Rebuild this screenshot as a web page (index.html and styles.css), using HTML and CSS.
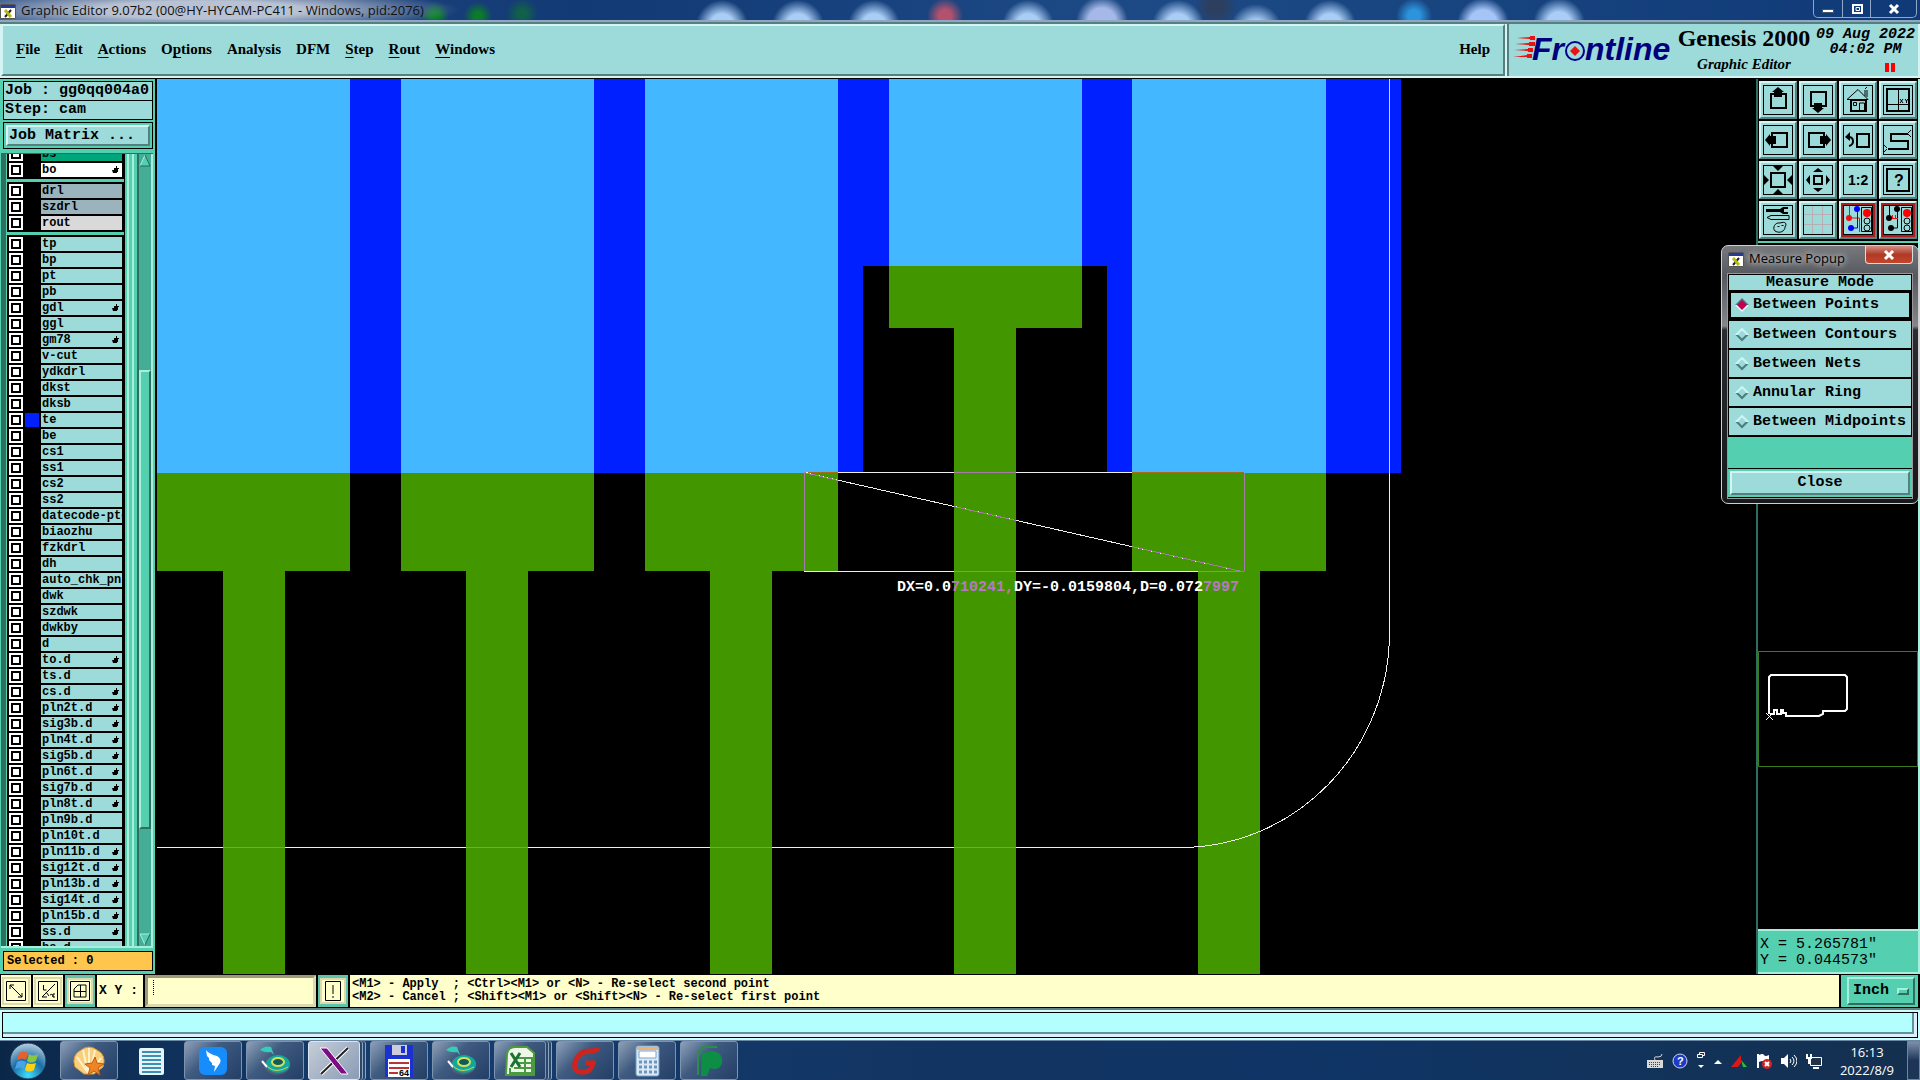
FILE: index.html
```html
<!DOCTYPE html>
<html lang="en">
<head>
<meta charset="utf-8">
<title>Graphic Editor 9.07b2</title>
<link rel="stylesheet" href="styles.css">
</head>
<body>
<svg class="defs" aria-hidden="true">
  <symbol id="hand" viewBox="0 0 8 8"><path d="M0 4h2V2h2V0h1v2h2v1H6v3H5v1H1z"/></symbol>
  <symbol id="xwin" viewBox="0 0 16 15"><path fill="#fff" stroke="#555" d="M.5.5h15v14H.5z"/><path fill="#223a9c" d="M1 1h14v3H1z"/><path stroke="#222" stroke-width="2" d="M11 6l-6 7"/><path stroke="#b5ba16" stroke-width="3" d="M5 6l6 7"/></symbol>
</svg>

<header class="titlebar">
  <svg class="winicon"><use href="#xwin"/></svg>
  <h1 class="caption">Graphic Editor 9.07b2 (00@HY-HYCAM-PC411 - Windows, pid:2076)</h1>
  <div class="winbuttons">
    <button aria-label="Minimize"><svg viewBox="0 0 14 12"><path fill="#fff" stroke="#456" d="M1.500 6.500h11v3h-11z"/></svg></button>
    <button aria-label="Restore"><svg viewBox="0 0 14 12"><path fill="none" stroke="#fff" stroke-width="2" d="M3 2h9v8H3z"/><path fill="none" stroke="#fff" d="M6 4.500h3.500v3H6z"/></svg></button>
    <button class="wide" aria-label="Close"><svg viewBox="0 0 14 12"><path stroke="#fff" stroke-width="3" d="M3 2l8 8M11 2l-8 8"/></svg></button>
  </div>
</header>

<div class="top">
  <nav class="menubar">
    <button><u>F</u>ile</button>
    <button><u>E</u>dit</button>
    <button><u>A</u>ctions</button>
    <button>O<u>p</u>tions</button>
    <button>Analysis</button>
    <button>DFM</button>
    <button><u>S</u>tep</button>
    <button><u>R</u>out</button>
    <button><u>W</u>indows</button>
    <button class="help">Help</button>
  </nav>
  <div class="brand">
    <svg class="logo" viewBox="0 0 162 34">
      <g fill="#e11"><path d="M4 6l13-1v-1h5v4h-5V7zM2 12l14-1v-1h6v4h-6v-1zM1 18l14-1v-1h5v4h-5v-1zM0 25l14-2v-1h5v4h-5v-1z"/></g>
      <text x="19" y="28">Fr</text>
      <circle cx="62" cy="19" r="9" fill="none" stroke="#00008b" stroke-width="2"/>
      <path fill="#e11" d="M62 14l5 5-5 5-5-5z"/>
      <text x="72" y="28">ntline</text>
    </svg>
    <div class="product"><strong>Genesis 2000</strong><em>Graphic Editor</em></div>
    <div class="clock"><span>09 Aug 2022</span><span>04:02 PM</span><i class="pause"></i></div>
  </div>
</div>

<main class="main">
  <aside class="side">
    <div class="jobinfo"><span>Job : gg0qq004a0</span><span>Step: cam</span></div>
    <div class="matrix"><button>Job Matrix ...</button></div>
    <div class="layers">
      <div class="list">
        <div class="group first">
          <label class="row green"><input type="checkbox"><i></i><span>bs</span></label>
          <label class="row white"><input type="checkbox"><i></i><span>bo<svg><use href="#hand"/></svg></span></label>
        </div>
        <div class="group">
          <label class="row steel"><input type="checkbox"><i></i><span>drl</span></label>
          <label class="row steel"><input type="checkbox"><i></i><span>szdrl</span></label>
          <label class="row grey"><input type="checkbox"><i></i><span>rout</span></label>
        </div>
        <div class="group">
          <label class="row"><input type="checkbox"><i></i><span>tp</span></label>
          <label class="row"><input type="checkbox"><i></i><span>bp</span></label>
          <label class="row"><input type="checkbox"><i></i><span>pt</span></label>
          <label class="row"><input type="checkbox"><i></i><span>pb</span></label>
          <label class="row"><input type="checkbox"><i></i><span>gdl<svg><use href="#hand"/></svg></span></label>
          <label class="row"><input type="checkbox"><i></i><span>ggl</span></label>
          <label class="row"><input type="checkbox"><i></i><span>gm78<svg><use href="#hand"/></svg></span></label>
          <label class="row"><input type="checkbox"><i></i><span>v-cut</span></label>
          <label class="row"><input type="checkbox"><i></i><span>ydkdrl</span></label>
          <label class="row"><input type="checkbox"><i></i><span>dkst</span></label>
          <label class="row"><input type="checkbox"><i></i><span>dksb</span></label>
          <label class="row shown"><input type="checkbox"><i></i><span>te</span></label>
          <label class="row"><input type="checkbox"><i></i><span>be</span></label>
          <label class="row"><input type="checkbox"><i></i><span>cs1</span></label>
          <label class="row"><input type="checkbox"><i></i><span>ss1</span></label>
          <label class="row"><input type="checkbox"><i></i><span>cs2</span></label>
          <label class="row"><input type="checkbox"><i></i><span>ss2</span></label>
          <label class="row"><input type="checkbox"><i></i><span>datecode-pte</span></label>
          <label class="row"><input type="checkbox"><i></i><span>biaozhu</span></label>
          <label class="row"><input type="checkbox"><i></i><span>fzkdrl</span></label>
          <label class="row"><input type="checkbox"><i></i><span>dh</span></label>
          <label class="row"><input type="checkbox"><i></i><span>auto_chk_pnl</span></label>
          <label class="row"><input type="checkbox"><i></i><span>dwk</span></label>
          <label class="row"><input type="checkbox"><i></i><span>szdwk</span></label>
          <label class="row"><input type="checkbox"><i></i><span>dwkby</span></label>
          <label class="row"><input type="checkbox"><i></i><span>d</span></label>
          <label class="row"><input type="checkbox"><i></i><span>to.d<svg><use href="#hand"/></svg></span></label>
          <label class="row"><input type="checkbox"><i></i><span>ts.d</span></label>
          <label class="row"><input type="checkbox"><i></i><span>cs.d<svg><use href="#hand"/></svg></span></label>
          <label class="row"><input type="checkbox"><i></i><span>pln2t.d<svg><use href="#hand"/></svg></span></label>
          <label class="row"><input type="checkbox"><i></i><span>sig3b.d<svg><use href="#hand"/></svg></span></label>
          <label class="row"><input type="checkbox"><i></i><span>pln4t.d<svg><use href="#hand"/></svg></span></label>
          <label class="row"><input type="checkbox"><i></i><span>sig5b.d<svg><use href="#hand"/></svg></span></label>
          <label class="row"><input type="checkbox"><i></i><span>pln6t.d<svg><use href="#hand"/></svg></span></label>
          <label class="row"><input type="checkbox"><i></i><span>sig7b.d<svg><use href="#hand"/></svg></span></label>
          <label class="row"><input type="checkbox"><i></i><span>pln8t.d<svg><use href="#hand"/></svg></span></label>
          <label class="row"><input type="checkbox"><i></i><span>pln9b.d</span></label>
          <label class="row"><input type="checkbox"><i></i><span>pln10t.d</span></label>
          <label class="row"><input type="checkbox"><i></i><span>pln11b.d<svg><use href="#hand"/></svg></span></label>
          <label class="row"><input type="checkbox"><i></i><span>sig12t.d<svg><use href="#hand"/></svg></span></label>
          <label class="row"><input type="checkbox"><i></i><span>pln13b.d<svg><use href="#hand"/></svg></span></label>
          <label class="row"><input type="checkbox"><i></i><span>sig14t.d<svg><use href="#hand"/></svg></span></label>
          <label class="row"><input type="checkbox"><i></i><span>pln15b.d<svg><use href="#hand"/></svg></span></label>
          <label class="row"><input type="checkbox"><i></i><span>ss.d<svg><use href="#hand"/></svg></span></label>
          <label class="row"><input type="checkbox"><i></i><span>bs.d</span></label>
        </div>
      </div>
      <div class="rail"></div>
      <div class="scroll">
        <svg viewBox="0 0 12 13"><path fill="#54cfb0" d="M6 1l5 11H1z"/><path fill="none" stroke="#a8eedd" d="M6 1L1 12"/><path fill="none" stroke="#256b58" d="M6 1l5 11H1"/></svg>
        <div class="trough"><div class="thumb"></div></div>
        <svg viewBox="0 0 12 13"><path fill="#54cfb0" d="M1 1h10L6 12z"/><path fill="none" stroke="#a8eedd" d="M6 12L1 1h10"/><path fill="none" stroke="#256b58" d="M11 1L6 12"/></svg>
      </div>
    </div>
    <div class="selected">Selected : 0</div>
  </aside>

  <svg class="canvas" viewBox="157 79 1600 895" preserveAspectRatio="xMinYMin slice" shape-rendering="crispEdges">
    <g fill="#0020ff">
      <path d="M350 79h51v394h-51zM594 79h51v394h-51zM1326 79h75v394h-75z"/>
      <path d="M838 79h51v187h-26v207h-25zM1082 79h50v394h-25V266h-25z"/>
    </g>
    <path fill="#43b7ff" d="M157 79h193v394H157zM401 79h193v394H401zM645 79h193v394H645zM889 79h193v187H889zM1132 79h194v394h-194z"/>
    <g fill="#429700">
      <path d="M157 473h193v98h-65v403h-62V571h-66zM401 473h193v98h-66v403h-62V571h-65zM645 473h193v98h-66v403h-62V571h-65zM889 266h193v62h-66v646h-62V328h-65zM1132 473h194v98h-66v403h-62V571h-66z"/>
    </g>
    <g fill="none" stroke="#eee">
      <path stroke="#dcdca0" d="M1389.500 79v394"/>
      <path d="M1389.500 473v159A209 215 0 0 1 1180.500 847.500H157"/>
      <path d="M804 472.500h440M804 571.500h440M804 472.500l438 99"/>
    </g>
    <g fill="none" stroke="#a77ba7">
      <path d="M804.500 473v98M1244.500 473v98M954 472.500h62M954 571.500h62M1198 571.500h46M804 472.500l34 8M954 506.500l62 14M1132 546.500l110 25"/>
      <path stroke="#a86a18" d="M808 472.500h30M1132 472.500h112"/>
      <path d="M223 847.500h62M466 847.500h62M710 847.500h62M954 847.500h62"/>
    </g>
    <text x="897" y="591" fill="#fff">DX=0.0<tspan fill="#b878c8">710241,</tspan>DY=-0.0159804,D=0.072<tspan fill="#b878c8">7997</tspan></text>
  </svg>

  <aside class="right">
    <div class="tools">
      <button aria-label="Pan up"><svg viewBox="0 0 30 30"><path class="b" d="M8 9h15v14H8z"/><path d="M15 2l6 5h-2v5h-8V7H9z"/></svg></button>
      <button aria-label="Pan down"><svg viewBox="0 0 30 30"><path class="b" d="M8 7h15v14H8z"/><path d="M15 28l6-5h-2v-5h-8v5H9z"/></svg></button>
      <button aria-label="Home"><svg viewBox="0 0 30 30"><path class="l" d="M4 14.500L15 4.500l10 10zM22 11V5M24 12V5M22 4l2-2"/><path class="b" d="M8 15h15v11H8z"/><path class="l" d="M16.500 26v-8h5v8M10.500 17.500h3v3h-3z"/></svg></button>
      <button aria-label="Zoom to coordinates"><svg viewBox="0 0 30 30"><path class="b" d="M4 4h22v22H4z"/><path class="l" d="M15.500 4v22M4 19.500h22M17 14l3 4M20 14l-3 4M22 14l1.500 2M25 14l-1.500 2v2"/></svg></button>
      <button aria-label="Pan left"><svg viewBox="0 0 30 30"><path class="b" d="M9 8h15v14H9z"/><path d="M2 15l5-6v2h6v8H7v2z"/></svg></button>
      <button aria-label="Pan right"><svg viewBox="0 0 30 30"><path class="b" d="M6 8h15v14H6z"/><path d="M28 15l-5-6v2h-6v8h6v2z"/></svg></button>
      <button aria-label="Previous view"><svg viewBox="0 0 30 30"><path class="b" d="M14 9h12v13H14zM5 12c6-1 7 8 1 9"/><path d="M2 12l5-5v9z"/></svg></button>
      <button aria-label="Serpentine"><svg viewBox="0 0 30 30"><path class="b" d="M25 9H8v7h17v8H5"/><path class="l" d="M25 8l3-3M25 9l3 3M4 23l-3-3M4 24l-3 3"/></svg></button>
      <button aria-label="Zoom in"><svg viewBox="0 0 30 30"><path class="b" d="M8 8h14v14H8z"/><path d="M10 1h10l-5 5zM10 29h10l-5-5zM1 10v10l5-5zM29 10v10l-5-5z"/></svg></button>
      <button aria-label="Zoom out"><svg viewBox="0 0 30 30"><path class="b" d="M11 11h8v8h-8z"/><path d="M10 7h10l-5-4zM10 23h10l-5 4zM7 10v10l-4-5zM23 10v10l4-5z"/></svg></button>
      <button aria-label="Zoom ratio"><svg viewBox="0 0 30 30"><text x="5" y="20" font-size="14" class="sans">1:2</text></svg></button>
      <button aria-label="Query"><svg viewBox="0 0 30 30"><path class="b" d="M4 4h22v22H4z"/><text x="11" y="21" font-size="16" class="sans">?</text></svg></button>
      <button aria-label="Options"><svg viewBox="0 0 30 30"><path d="M3 4h14l3-2h5v2h-4v3h4v2h-5l-3-2H3z"/><path class="l" d="M4 12.500l4-2h18v4H8zM12 26c-3-3 0-9 5-8 6-2 7 1 5 4 0 4-5 7-10 4zM14.500 21.500h2M18.500 20.500h2"/></svg></button>
      <button aria-label="Grid"><svg viewBox="0 0 30 30"><path class="l pink" d="M9.500 1v28M19.500 1v28M1 9.500h28M1 19.500h28"/></svg></button>
      <button class="alert" aria-label="Online checks"><svg viewBox="0 0 30 30"><path class="l red" d="M6.500 1v12h10v14"/><path class="l blue" d="M14.500 5v18h-5"/><circle cx="6" cy="13" r="3" fill="#e11"/><circle cx="14" cy="4" r="3" fill="#00f"/><circle cx="8" cy="23" r="3" fill="#00f"/><path class="l" d="M18.500 2.500h10v24h-10z"/><circle cx="24" cy="8" r="4" fill="#f00"/><circle class="l" cx="24" cy="16" r="3"/><circle class="l" cx="24" cy="23" r="3"/></svg></button>
      <button class="alert" aria-label="Net checks"><svg viewBox="0 0 30 30"><path class="l" d="M6.500 1v12M14.500 5v18h-5"/><path class="l red" d="M7 13.500h8M9.500 10v3M12.500 10v3"/><circle cx="6" cy="13" r="3"/><circle cx="14" cy="4" r="3"/><circle cx="8" cy="23" r="3"/><path class="l" d="M18.500 2.500h10v24h-10z"/><circle cx="24" cy="8" r="4" fill="#f00"/><circle class="l" cx="24" cy="16" r="3"/><circle class="l" cx="24" cy="23" r="3"/></svg></button>
    </div>
    <div class="preview">
      <svg viewBox="0 0 160 116"><path fill="none" stroke="#3c7a1c" d="M.5.5h159v115H.5z"/><path fill="none" stroke="#fff" stroke-width="2" d="M11 63V26l2-2h74l2 2v32l-2 2H65v3l-4 2H28v-3h-3v-3h-2v4h-4v-4h-3v4h-4"/><path stroke="#fff" d="M8 62l7 7M15 62l-7 7"/></svg>
    </div>
    <div class="coords"><span>X = 5.265781"</span><span>Y = 0.044573"</span></div>
  </aside>
</main>

<div class="prompt">
  <button class="sq" aria-label="Snap diagonal"><svg viewBox="0 0 20 20"><path class="l" d="M.5.5h19v19H.5zM4 4l12 12M4 8V4h4M16 12v4h-4"/></svg></button>
  <button class="sq" aria-label="Angle mode"><svg viewBox="0 0 20 20"><path class="l" d="M.5.5h19v19H.5zM17 3L4 16h5M5.500 4v5h3M8 11l3 4M12 14q3-2 3 2M17 13h-2v3h2"/></svg></button>
  <button class="sq on" aria-label="Snap grid"><svg viewBox="0 0 20 20"><path class="l" d="M.5.5h19v19H.5zM4 8l4-4h8v12H4zM10.500 4v12M4 10.500h12"/></svg></button>
  <label class="xy" for="xy">X Y :</label>
  <input id="xy" type="text" value="">
  <button class="sq on" aria-label="Warning"><svg viewBox="0 0 20 20"><path class="l" d="M2.500.5h15v19h-15zM10 4v9M10 15v2"/></svg></button>
  <p class="hint">&lt;M1&gt; - Apply  ; &lt;Ctrl&gt;&lt;M1&gt; or &lt;N&gt; - Re-select second point
&lt;M2&gt; - Cancel ; &lt;Shift&gt;&lt;M1&gt; or &lt;Shift&gt;&lt;N&gt; - Re-select first point</p>
  <div class="units"><button>Inch<i></i></button></div>
</div>
<div class="status"><div></div></div>

<footer class="taskbar">
  <button class="orb" aria-label="Start"><svg viewBox="0 0 38 38"><defs><radialGradient id="orbfill" cx=".5" cy=".9" r=".9"><stop offset="0" stop-color="#3fe0ff"/><stop offset=".5" stop-color="#1b6ea5"/><stop offset="1" stop-color="#b9cfdf"/></radialGradient></defs><circle cx="19" cy="19" r="18" fill="url(#orbfill)" stroke="#17334f"/><path fill="#e8602c" d="M10 11q5-3 9 0l-2 7q-4-3-9 0z"/><path fill="#8cc63f" d="M20 12q4 3 9 0l-2 7q-5 3-9 0z"/><path fill="#4aa3e8" d="M8 20q4-3 9 0l-2 7q-4-3-9 0z"/><path fill="#fcd116" d="M18 21q4 2 9 0l-2 7q-5 3-9 0z"/></svg></button>
  <button class="app" aria-label="Shell"><svg viewBox="0 0 32 32"><path fill="#f8cf7c" stroke="#d9963a" d="M11 29L2 22Q-2 10 8 5q8-6 16 0 10 5 6 17l-9 7z"/><path stroke="#fff1c9" stroke-width="2" d="M15 28L4 12M15 28L10 5M16 28V3M17 28l5-23M17 28l11-15"/><path fill="#ee8424" stroke="#c25a10" d="M22 12l2 6 7 1-6 4 2 7-6-4-6 4 2-7-5-4 7-1z"/></svg></button>
  <button class="app flat" aria-label="Notes"><svg viewBox="0 0 32 32"><rect x="4" y="3" width="25" height="27" rx="2" fill="#e6f4fa"/><path stroke="#3c8fb5" stroke-width="2" d="M7 7h19M7 11h19M7 15h19M7 19h19M7 23h19M7 27h19"/></svg></button>
  <button class="app" aria-label="DingTalk"><svg viewBox="0 0 32 32"><rect x="2" y="2" width="28" height="28" rx="6" fill="#168dfb"/><path fill="#fff" d="M9 5q3 4 11 6 5 3 3 7l-6 9 1-6-3-1v-2l-3-3v-2l-2-2z"/></svg></button>
  <button class="app" aria-label="Genesis"><svg viewBox="0 0 32 32"><ellipse cx="18" cy="20" rx="13" ry="10" fill="#555a78"/><ellipse cx="19" cy="19" rx="12" ry="9" fill="#12a79b"/><ellipse cx="19" cy="17" rx="6" ry="4" fill="#115c58" stroke="#d7de5c" stroke-width="2"/><path fill="none" stroke="#c5d65a" d="M9 22q8 7 20 0"/><path fill="#36cdb8" d="M1 5q5-5 11-3l3 8-3-3q-6 1-11-2z"/><path stroke="#fff" stroke-width="2" d="M3 16l5 6"/></svg></button>
  <button class="app active stack" aria-label="X server"><svg viewBox="0 0 32 32"><path stroke="#fff" stroke-width="4" d="M30 3L3 29"/><path stroke="#222" stroke-width="2" d="M30 3L3 29"/><path fill="#7d0d86" stroke="#fff" d="M2 3h7l21 26h-7z"/></svg></button>
  <button class="app" aria-label="Save"><svg viewBox="0 0 32 32"><path fill="#1b32d0" d="M2 0h28v32H2z"/><path fill="#ccd" d="M9 0h15v10H9z"/><path fill="#1b32d0" d="M18 1h4v7h-4z"/><path fill="#fff" d="M5 14h22v18H5z"/><path stroke="#b33" stroke-width="2" d="M6 18h20M6 23h20M6 28h9"/><text x="16" y="31" font-size="9">64</text></svg></button>
  <button class="app" aria-label="Genesis tools"><svg viewBox="0 0 32 32"><ellipse cx="18" cy="20" rx="13" ry="10" fill="#555a78"/><ellipse cx="19" cy="19" rx="12" ry="9" fill="#12a79b"/><ellipse cx="19" cy="17" rx="6" ry="4" fill="#115c58" stroke="#d7de5c" stroke-width="2"/><path fill="none" stroke="#c5d65a" d="M9 22q8 7 20 0"/><path fill="#36cdb8" d="M1 5q5-5 11-3l3 8-3-3q-6 1-11-2z"/><path stroke="#fff" stroke-width="2" d="M3 16l5 6"/></svg></button>
  <button class="app stack" aria-label="Excel"><svg viewBox="0 0 32 32"><path fill="#eef6e8" stroke="#4f9a3c" stroke-width="2" d="M3 9q1-7 8-7h12l7 6v22H2z"/><path fill="none" stroke="#4a9a44" stroke-width="2" d="M14 13h14v15H6v-5M21 13v15M14 18h14M10 23h18"/><path stroke="#1c7030" stroke-width="3" d="M7 8l9 14M16 8L7 22"/></svg></button>
  <button class="app" aria-label="G editor"><svg viewBox="0 0 32 32"><path fill="none" stroke="#d0231d" stroke-width="5" d="M29 3Q28 6 20 6 9 7 6 18q-2 10 9 9 7 0 9-9h-8"/></svg></button>
  <button class="app" aria-label="Calculator"><svg viewBox="0 0 32 32"><rect x="5" y="1" width="23" height="30" rx="2" fill="#dbe8f5" stroke="#6d9cc7"/><path fill="#f0b26b" d="M6 2h21v3H6z"/><path fill="#fff" stroke="#7da5cc" d="M8 6h17v7H8z"/><path stroke="#6c94bd" stroke-width="3" stroke-dasharray="3 2" d="M8 17h18M8 22h18M8 27h18"/></svg></button>
  <button class="app" aria-label="P viewer"><svg viewBox="0 0 32 32"><path fill="none" stroke="#2c8c48" stroke-width="2" d="M5 30V7l5-5h14"/><path fill="#0c8f45" d="M9 9q10-6 18 0 5 8-1 14-5 2-9 0l-3 8H8z"/></svg></button>
  <div class="tray">
    <svg viewBox="0 0 16 16"><path fill="#d8d8d8" d="M0 7h16v8H0z"/><path fill="none" stroke="#d8d8d8" d="M8 7q-2-4 3-3 4 0 4-3"/><path stroke="#444" stroke-dasharray="1 1" d="M2 9.500h12M2 11.500h12M4 13.500h8"/></svg>
    <svg viewBox="0 0 16 16"><circle cx="8" cy="8" r="7" fill="#1e3bc4" stroke="#c9d3f5"/><text x="5" y="12" font-size="11" fill="#fff" class="sans">?</text></svg>
    <svg class="slim" viewBox="0 0 8 18"><path fill="none" stroke="#fff" d="M2.500 2V.5h5v3H6M.5 2.500h5v3h-5z"/><path fill="#fff" d="M1 13h6l-3 3z"/></svg>
    <svg class="slim" viewBox="0 0 8 18"><path fill="#fff" d="M0 12h8L4 8z"/></svg>
    <svg viewBox="0 0 16 16"><path fill="#e01515" d="M0 14L10 2v8l-3 4z"/><path fill="#24c63a" d="M10 7l6 7h-4z"/></svg>
    <svg viewBox="0 0 16 16"><path fill="#fff" d="M1 1h2v14H1zM3 2q4-2 5 0t5 0v7q-4 2-5 0T3 9z"/><circle cx="11" cy="11" r="5" fill="#d32222"/><path stroke="#fff" stroke-width="2" d="M9 9l4 4M13 9l-4 4"/></svg>
    <svg viewBox="0 0 16 16"><path fill="#fff" d="M0 5h3l4-4v14l-4-4H0z"/><path fill="none" stroke="#fff" d="M9 6q2 2 0 4M11 4q4 4 0 8M13 2q6 6 0 12"/></svg>
    <svg viewBox="0 0 16 16"><path fill="#234" stroke="#fff" d="M4.500 4.500h11v8h-11z"/><path stroke="#fff" stroke-width="2" fill="none" d="M7 15h6M1 1v4h4V1M3 5v6"/></svg>
    <div class="time"><span>16:13</span><span>2022/8/9</span></div>
  </div>
  <button class="peek" aria-label="Show desktop"></button>
</footer>

<section class="popup" aria-label="Measure Popup">
  <header><svg class="winicon"><use href="#xwin"/></svg><h2>Measure Popup</h2><button class="close" aria-label="Close popup"><svg viewBox="0 0 14 12"><path stroke="#fff" stroke-width="3" d="M3 2l8 8M11 2l-8 8"/></svg></button></header>
  <form class="pbody">
    <div class="ptitle">Measure Mode</div>
    <label class="picked"><input type="radio" name="mode" checked>Between Points</label>
    <label><input type="radio" name="mode">Between Contours</label>
    <label><input type="radio" name="mode">Between Nets</label>
    <label><input type="radio" name="mode">Annular Ring</label>
    <label><input type="radio" name="mode">Between Midpoints</label>
    <div class="spacer"></div>
    <div class="closebox"><button type="button">Close</button></div>
  </form>
</section>
</body>
</html>
```
FILE: styles.css
```css
:root {
  --aqua: #9cdbda;
  --teal: #54cfb0;
  --teal-hi: #a8eedd;
  --teal-lo: #2f6f60;
  --hi: #d4f5f3;
  --lo: #56807f;
  --cream: #ffffcc;
  --mono: "Liberation Mono", "DejaVu Sans Mono", monospace;
  --serif: "Liberation Serif", serif;
}
* { box-sizing: border-box; }
body {
  margin: 0;
  height: 100vh;
  display: flex;
  flex-direction: column;
  overflow: hidden;
  background: #000;
  color: #000;
  font: bold 15px/18px var(--mono);
}
button, input { font: inherit; color: inherit; margin: 0; padding: 0; border: 0; border-radius: 0; background: none; }
svg { display: block; flex: none; }
.defs { position: absolute; width: 0; height: 0; }
.b { fill: none; stroke: #000; stroke-width: 2; }
.l { fill: none; stroke: #000; }
.pink { stroke: #b9aeb4; }
.red { stroke: #e11; }
.blue { stroke: #00f; }
.sans { font-family: "Liberation Sans", sans-serif; }

/* window title */
.titlebar {
  flex: none;
  height: 22px;
  display: flex;
  align-items: flex-start;
  border-bottom: 2px solid #8fa6c4;
  background:
    radial-gradient(ellipse 260px 22px at 200px 10px, #b9c2d2 40%, transparent),
    radial-gradient(circle at 435px 16px, #0b7a2c 4px, transparent 14px),
    radial-gradient(circle at 478px 16px, #0b7a2c 4px, transparent 14px),
    radial-gradient(circle at 522px 14px, #11604a 4px, transparent 16px),
    radial-gradient(circle at 722px 26px, #a9cdf5 12px, transparent 26px),
    radial-gradient(circle at 798px 26px, #a9cdf5 12px, transparent 26px),
    radial-gradient(circle at 874px 26px, #a9cdf5 12px, transparent 26px),
    radial-gradient(circle at 945px 16px, #b4526e 6px, transparent 18px),
    radial-gradient(circle at 1028px 26px, #a9cdf5 12px, transparent 26px),
    radial-gradient(circle at 1102px 22px, #a5b8e8 14px, transparent 26px),
    radial-gradient(circle at 1178px 26px, #a9cdf5 12px, transparent 26px),
    radial-gradient(circle at 1216px 6px, #2c3f60 8px, transparent 22px),
    radial-gradient(circle at 1256px 30px, #a9cdf5 10px, transparent 26px),
    radial-gradient(circle at 1330px 26px, #a9cdf5 12px, transparent 26px),
    radial-gradient(circle at 1414px 16px, #2c94dc 6px, transparent 18px),
    radial-gradient(circle at 1483px 24px, #a5c4f8 14px, transparent 26px),
    radial-gradient(circle at 1559px 24px, #a9cdf5 12px, transparent 26px),
    linear-gradient(90deg, #2a4c83, #123a75 30%, #1d4a85 60%, #0f3a77);
}
.winicon { width: 16px; height: 15px; }
.titlebar .winicon { margin-top: 4px; }
.caption {
  margin: 0 auto 0 5px;
  font: 13px/21px "Open Sans", "Noto Sans", sans-serif;
  color: #111;
}
.winbuttons {
  display: flex;
  height: 18px;
  margin-right: 3px;
  border: 1px solid #8fa8c8;
  border-top: 0;
  border-radius: 0 0 5px 5px;
}
.winbuttons button { width: 28px; display: grid; place-items: center; }
.winbuttons button + button { border-left: 1px solid #8fa8c8; }
.winbuttons .wide { width: 46px; }
.winbuttons svg { width: 14px; height: 12px; }

/* menu and brand */
.top { flex: none; height: 57px; display: flex; background: var(--hi); border-top: 2px solid var(--lo); border-bottom: 1px solid #000; }
.menubar {
  flex: 1;
  display: flex;
  align-items: center;
  gap: 15px;
  margin: 0 2px 2px 1px;
  padding: 0 13px 2px;
  background: var(--aqua);
  border: 2px solid;
  border-color: var(--hi) var(--lo) var(--lo) var(--hi);
  font: bold 15px/18px var(--serif);
}
.menubar u { text-decoration-thickness: 1px; text-underline-offset: 3px; }
.help { margin-left: auto; }
.brand {
  flex: none;
  width: 413px;
  display: flex;
  padding-left: 4px;
  margin-bottom: 2px;
  background: var(--aqua);
  border-left: 2px solid var(--lo);
  border-right: 2px solid var(--hi);
}
.logo { width: 162px; height: 34px; margin-top: 8px; }
.logo text { font: italic bold 32px "Liberation Sans", sans-serif; fill: #00007c; }
.product { width: 138px; display: flex; flex-direction: column; align-items: center; }
.product strong { font: bold 24px/29px var(--serif); white-space: nowrap; }
.product em { font: italic bold 15px/22px var(--serif); }
.clock { flex: 1; display: flex; flex-direction: column; align-items: center; padding-top: 3px; font-style: italic; line-height: 15px; white-space: nowrap; }
.pause { width: 10px; height: 9px; margin: 6px 0 0 48px; border: solid #f00; border-width: 0 4px; }

/* working area */
.main { flex: 1; min-height: 0; display: flex; }
.side { flex: none; width: 157px; display: flex; flex-direction: column; padding: 2px 4px 3px 1px; background: linear-gradient(90deg, var(--teal) 155px, #000 155px); }
.jobinfo, .matrix, .selected { margin: 0 0 0 2px; border: 1px solid #000; background: var(--aqua); white-space: pre; }
.jobinfo span { display: block; height: 18px; padding-left: 1px; line-height: 18px; }
.jobinfo span + span { height: 19px; border-top: 1px solid #000; }
.matrix { margin-top: 2px; padding: 2px; background: var(--teal); }
.matrix button { width: 100%; height: 21px; padding-left: 1px; text-align: left; background: var(--aqua); border: 2px solid; border-color: var(--hi) var(--lo) var(--lo) var(--hi); line-height: 17px; }
.layers { flex: 1; min-height: 0; display: flex; margin-top: 4px; border-top: 1px solid var(--teal-lo); border-bottom: 2px solid var(--teal-hi); }
.list { width: 124px; overflow: hidden; border-left: 5px solid var(--teal-lo); padding: 0 0 0 1px; }
.group { width: 117px; margin-bottom: 3px; padding: 2px; display: grid; gap: 2px; background: #000; }
.group.first { margin-top: -9px; }
.row { display: grid; grid-template-columns: 14px 14px 81px; gap: 2px; height: 14px; }
.row input { appearance: none; width: 14px; height: 14px; background: #fff; box-shadow: inset 0 0 0 2px #fff, inset 0 0 0 4px #000; }
.row span { display: flex; justify-content: space-between; align-items: center; padding: 0 2px 0 1px; overflow: hidden; background: var(--aqua); font-size: 12px; line-height: 14px; white-space: nowrap; }
.row span svg { width: 8px; height: 8px; }
.green span { background: #00a679; }
.white span { background: #fff; }
.steel span { background: #9bb3bd; }
.grey span { background: #d9d9d9; }
.shown i { background: #0020ff; }
.rail { width: 13px; background: linear-gradient(90deg, #000 1px, var(--teal) 1px 3px, var(--teal-hi) 3px 5px, var(--teal) 5px 8px, var(--teal-hi) 8px 10px, var(--teal) 10px); }
.scroll { flex: 1; display: flex; flex-direction: column; align-items: center; background: #45ad97; border-left: 2px solid var(--teal-lo); border-right: 2px solid var(--teal-hi); }
.scroll svg { width: 12px; height: 13px; }
.trough { flex: 1; align-self: stretch; display: grid; grid-template-rows: 204fr 460fr 104fr; }
.thumb { grid-row: 2; background: var(--teal); border: 2px solid; border-color: var(--teal-hi) var(--teal-lo) var(--teal-lo) var(--teal-hi); }
.selected { margin-top: 3px; height: 20px; padding-left: 3px; background: #ffc54c; font-size: 12px; line-height: 19px; }

.canvas { flex: 1; min-width: 0; height: 100%; }
.canvas text { font: bold 15px var(--mono); white-space: pre; }

.right { flex: none; width: 164px; display: flex; flex-direction: column; border-left: 2px solid var(--teal-lo); border-right: 2px solid var(--teal-hi); }
.tools { display: grid; grid-template-columns: repeat(4, 38px); gap: 2px; padding: 2px 1px; border-bottom: 2px solid var(--teal); }
.tools button { height: 38px; padding: 2px; background: var(--aqua); border: 2px solid; border-color: var(--hi) var(--lo) var(--lo) var(--hi); }
.tools svg { width: 30px; height: 30px; outline: 1px solid #000; outline-offset: -1px; }
.tools .alert { background: #b01c1c; }
.tools .alert svg { background: var(--aqua); }
.preview { flex: 1; display: flex; flex-direction: column; justify-content: flex-end; padding-bottom: 162px; }
.preview svg { width: 160px; height: 116px; }
.coords { height: 45px; display: flex; flex-direction: column; padding: 6px 2px 0; background: var(--teal); border: solid; border-width: 2px 0; border-color: var(--teal-hi); line-height: 16px; font-weight: normal; white-space: pre; }

/* prompt line */
.prompt { flex: none; height: 34px; display: flex; align-items: stretch; padding: 1px 2px 1px 1px; background: #000; gap: 2px; }
.sq { width: 30px; padding: 3px; background: var(--cream); border: 1px solid var(--cream); display: grid; place-items: center; }
.sq svg { width: 20px; height: 20px; outline: 2px solid #dcd9ae; outline-offset: 2px; }
.sq.on { background: var(--cream); border: 3px solid #5fc4aa; padding: 0; }
.sq.on svg { outline-offset: 1px; }
.xy { width: 46px; padding-left: 2px; background: var(--cream); line-height: 32px; font-size: 13px; white-space: nowrap; }
.prompt input { width: 171px; padding-left: 6px; background: repeating-linear-gradient(#000 0 1px, transparent 1px 2px) 5px 2px / 1px 16px no-repeat var(--cream); border: 3px solid; border-color: #9d9a7b #dcd9ae #dcd9ae #9d9a7b; }
.hint { flex: 1; margin: 0; padding: 3px 2px; background: var(--cream); font-size: 12px; line-height: 13px; white-space: pre; }
.units { width: 77px; padding: 2px 3px 2px 6px; background: var(--teal); }
.units button { width: 100%; height: 100%; display: flex; align-items: center; justify-content: space-between; padding: 0 4px; border: 2px solid; border-color: var(--teal-hi) var(--teal-lo) var(--teal-lo) var(--teal-hi); }
.units i { width: 12px; height: 7px; border: 2px solid; border-color: var(--teal-hi) var(--teal-lo) var(--teal-lo) var(--teal-hi); }
.status { flex: none; height: 32px; padding: 2px; background: #c9ffff; border-top: 2px solid #667f80; }
.status div { height: 26px; background: #b3ffff; border: 1px solid #000; box-shadow: inset -3px -3px #def, inset -5px -5px #5c9696; }

/* taskbar */
.taskbar {
  flex: none;
  height: 40px;
  display: flex;
  gap: 4px;
  border-top: 1px solid #6c87a5;
  background: linear-gradient(90deg, #0b2748, #143d71 20%, #123462 50%, #0f3566 70%, #14304f);
}
.orb { width: 56px; display: grid; place-items: center; }
.orb svg { width: 38px; height: 38px; }
.app { width: 58px; display: grid; place-items: center; border: 1px solid #7d93ae; border-radius: 3px; background: linear-gradient(135deg, #8ea0b8, #3f5b80 40%, #243f66); }
.app svg { width: 32px; height: 32px; }
.app text { font: bold 9px "Liberation Sans", sans-serif; }
.flat { border-color: transparent; background: none; }
.active { background: linear-gradient(135deg, #c5ced9, #8a9bb4); border-color: #dde5ee; }
.stack { width: 52px; margin-right: 6px; box-shadow: 2px 0 #29466d, 3px 0 #8fa3bb, 5px 0 #29466d, 6px 0 #8fa3bb; }
.tray { margin-left: auto; display: flex; align-items: center; gap: 9px; color: #fff; }
.tray svg { width: 16px; height: 16px; }
.tray .slim { width: 8px; height: 18px; }
.time { width: 72px; display: flex; flex-direction: column; align-items: center; font: 13px/18px "Open Sans", sans-serif; }
.peek { width: 13px; border: 1px solid #6c87a5; background: linear-gradient(#7c90ab, #1d3557 50%); }

/* floating dialog */
.popup {
  position: absolute;
  right: 1px;
  top: 245px;
  width: 198px;
  padding: 0 5px 4px;
  border: 1px solid #cfcfcf;
  border-radius: 7px;
  background: linear-gradient(#77797d, #55585e 30px, #85878b 80px, #2a2c31 84px, #17181c);
}
.popup header { display: flex; height: 27px; padding-left: 1px; }
.popup .winicon { margin-top: 6px; }
.popup h2 { margin: 0 auto 0 5px; font: 13px/25px "Open Sans", sans-serif; color: #000; text-shadow: 0 0 6px #ccc, 0 0 6px #ccc; }
.close { width: 48px; height: 18px; display: grid; place-items: center; border: 1px solid #ddd; border-top: 0; border-radius: 0 0 4px 4px; background: linear-gradient(#d29084, #b03a26 50%, #c4452c); }
.close svg { width: 14px; height: 12px; }
.pbody { display: flex; flex-direction: column; gap: 2px; border: 1px solid #999; background: #000; padding: 1px 0; }
.ptitle { height: 15px; margin: 0 1px; background: var(--aqua); text-align: center; line-height: 15px; }
.pbody label { height: 27px; display: flex; align-items: center; gap: 4px; margin: 0 1px; padding-left: 6px; background: var(--aqua); white-space: nowrap; }
.pbody .picked { height: 24px; margin: 1px 3px 2px; padding-left: 4px; }
.pbody input { appearance: none; flex: none; width: 14px; height: 14px; background: linear-gradient(#c9f4f2 50%, #4c7c7c 50%); clip-path: polygon(50% 0, 100% 50%, 50% 100%, 0 50%); }
.pbody input::before { content: ""; display: block; width: 8px; height: 8px; margin: 3px; background: var(--aqua); clip-path: polygon(50% 0, 100% 50%, 50% 100%, 0 50%); }
.pbody input:checked { background: linear-gradient(#4c7c7c 50%, #e3fbfa 50%); }
.pbody input:checked::before { width: 10px; height: 10px; margin: 2px; background: #c3004d; }
.spacer { height: 31px; background: var(--teal); }
.closebox { margin-top: -1px; padding: 2px; background: var(--teal); }
.closebox button { width: 100%; height: 24px; background: var(--aqua); border: 2px solid; border-color: var(--hi) var(--lo) var(--lo) var(--hi); }
```
